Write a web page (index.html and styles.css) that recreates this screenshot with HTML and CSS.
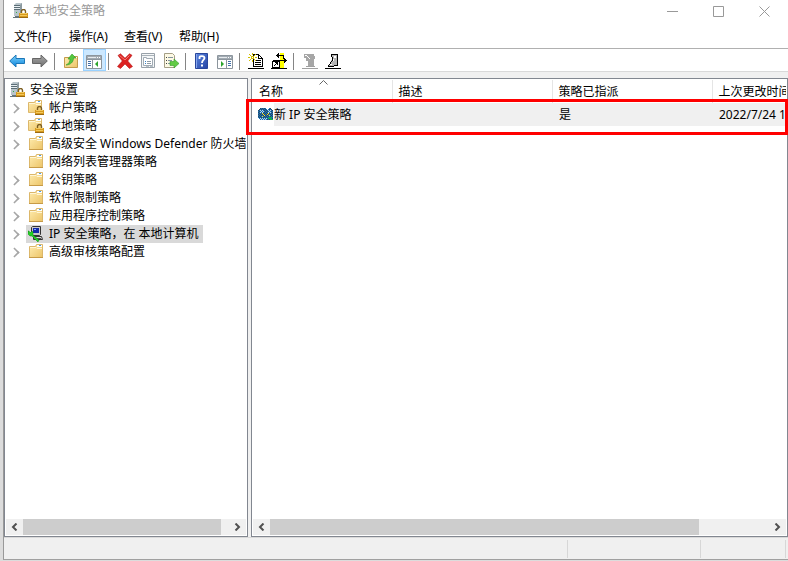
FILE: index.html
```html
<!DOCTYPE html>
<html lang="zh-CN">
<head>
<meta charset="utf-8">
<meta name="viewport" content="width=device-width,initial-scale=1">
<title>本地安全策略</title>
<link rel="stylesheet" href="styles.css">
</head>
<body>
<svg class="defs" aria-hidden="true">
	<defs>
		<linearGradient id="gFolder" x1="0" y1="0" x2="1" y2="1"><stop offset="0" stop-color="#ffedb0"/><stop offset="1" stop-color="#ecc468"/></linearGradient>
		<linearGradient id="gBlue" x1="0" y1="0" x2="0" y2="1"><stop offset="0" stop-color="#7fd3fb"/><stop offset="1" stop-color="#0a83dc"/></linearGradient>
		<linearGradient id="gGray" x1="0" y1="0" x2="0" y2="1"><stop offset="0" stop-color="#a8a8a8"/><stop offset="1" stop-color="#6f6f6f"/></linearGradient>
		<linearGradient id="gHelp" x1="0" y1="0" x2="1" y2="1"><stop offset="0" stop-color="#5b86e0"/><stop offset="1" stop-color="#2443a4"/></linearGradient>
		<symbol id="folder" viewBox="0 0 16 16">
			<path d="M1.500 2.500h6l1-2h6v13h-13z" fill="url(#gFolder)" stroke="#dcb76a"/>
			<path d="M9 1h5v2H9z" fill="#fff"/><path d="M11 1h2v1h-2z" fill="#4a9be0"/>
			<path d="M2 3.500h6l1 1h5" fill="none" stroke="#fff6d6"/>
			<path d="M1 13.500h14" stroke="#c79b47"/>
		</symbol>
		<symbol id="lock" viewBox="0 0 9 9">
			<path d="M2.500 4V2.500a2 2 0 0 1 4 0V4" fill="none" stroke="#7d5f22" stroke-width="1.400"/>
			<path d="M0 4h9v5H0z" fill="#d79a1e"/><path d="M1 4.500h7M1 6.500h7" stroke="#f2c95c"/><path d="M0 8.500h9" stroke="#9a6a12"/>
		</symbol>
		<symbol id="folderlock" viewBox="0 0 16 16">
			<path d="M.5 2.500h6l1-2h6v12H.5z" fill="url(#gFolder)" stroke="#dcb76a"/>
			<path d="M8 1h5v2H8z" fill="#fff"/><path d="M10 1h2v1h-2z" fill="#4a9be0"/>
			<path d="M1 3.500h6l1 1h5" fill="none" stroke="#fff6d6"/>
			<use href="#lock" x="7" y="6" width="9" height="9"/>
		</symbol>
		<symbol id="server" viewBox="0 0 16 16">
			<path d="M1 2l2-2h6v13H1z" fill="#b9c5cb"/><path d="M7 2l2-2v13H7z" fill="#8b999f"/>
			<path d="M1 2.500h6M1 4.500h6M1 6.500h6" stroke="#5b6d76"/><path d="M1 3.500h6M1 5.500h6" stroke="#e6edf0"/>
			<path d="M3 9h1v1H3z" fill="#37ad4a"/><path d="M2 13.500h5M0 14.500h8" stroke="#66747b"/>
			<use href="#lock" x="6" y="6" width="9" height="9"/>
		</symbol>
		<symbol id="panel" viewBox="0 0 16 14">
			<path d="M.5.5h15v13H.5z" fill="#fff" stroke="#8c959d"/><path d="M1 1h14v3H1z" fill="#a2abb3"/>
			<path d="M2 2.500h8" stroke="#e6eaed"/><path d="M11 2h1v1h-1zM13 2h1v1h-1z" fill="#fff"/>
			<path d="M1 4.500h14" stroke="#8c959d"/>
		</symbol>
	</defs>
</svg>

<div class="window">
	<header class="title">
		<svg class="ico" viewBox="0 0 16 16"><use href="#server"/></svg>
		<h1>本地安全策略</h1>
		<div class="winbtns">
			<button type="button" aria-label="最小化"><svg viewBox="0 0 11 11"><path d="M0 5.500h11"/></svg></button>
			<button type="button" aria-label="最大化"><svg viewBox="0 0 11 11"><path d="M.5.5h10v10H.5z"/></svg></button>
			<button type="button" aria-label="关闭"><svg viewBox="0 0 11 11"><path d="M.5.5l10 10M10.500.5l-10 10"/></svg></button>
		</div>
	</header>

	<nav class="menu">
		<button type="button">文件(F)</button>
		<button type="button">操作(A)</button>
		<button type="button">查看(V)</button>
		<button type="button">帮助(H)</button>
	</nav>

	<div class="toolbar">
		<button type="button" aria-label="后退"><svg viewBox="0 0 16 16"><path d="M.7 8L7 2v3.500h8.500v5H7V14z" fill="url(#gBlue)" stroke="#1c77b8"/></svg></button>
		<button type="button" aria-label="前进"><svg viewBox="0 0 16 16"><path d="M15.300 8L9 2v3.500H.5v5H9V14z" fill="url(#gGray)" stroke="#666"/></svg></button>
		<i class="sep"></i>
		<button type="button" aria-label="上一级"><svg viewBox="0 0 16 16"><path d="M1.500 4.500h6l1-1h6v11h-13z" fill="url(#gFolder)" stroke="#c39b4c"/><path d="M10 4h4v1h-4z" fill="#fff"/><path d="M3 12c3-1 4-4 4-6H5l4-5 4 4h-2.500c0 4-3 7-7.500 7z" fill="#55c73f" stroke="#2e9a25" stroke-width=".6"/></svg></button>
		<button type="button" class="on" aria-label="显示/隐藏控制台树"><svg viewBox="0 0 16 16"><use href="#panel" y="2" width="16" height="14"/><path d="M6.500 7v8" stroke="#8c959d"/><path d="M2 8.500h3M2 10.500h3M2 12.500h3" stroke="#3f6fa8"/><path d="M12 8v6l-3-3z" fill="#2ca52c"/></svg></button>
		<i class="sep"></i>
		<button type="button" aria-label="删除"><svg viewBox="0 0 16 16"><path d="M1 2.500L3.500.8 8 5.200 12.500.8 15 2.300 10.700 8l4.800 5.500-3 2L8 10.900l-4.500 4.600-3-2L5.300 8z" fill="#dd2222" stroke="#b51717" stroke-width=".6"/><path d="M2.500 2.500L8 7l4.500-4.500" fill="none" stroke="#f27b72"/></svg></button>
		<button type="button" aria-label="属性"><svg viewBox="0 0 16 16"><path d="M1.500.5h13v14h-13z" fill="#f5f7f8" stroke="#98a1a9"/><path d="M2 2.500h12" stroke="#a8b1b8"/><path d="M3.500 4.500h3v1h6v7h-9z" fill="#fff" stroke="#a1abb4"/><path d="M5 8.500h1M5 10.500h1" stroke="#3683c6"/><path d="M7 8.500h4M7 10.500h4" stroke="#8f9ba5"/><path d="M6 13.500h3M10 13.500h3" stroke="#b7c0c7"/></svg></button>
		<button type="button" aria-label="导出列表"><svg viewBox="0 0 16 16"><path d="M1.500.5h8l2 2v12h-10z" fill="#fdf9e4" stroke="#a59f86"/><path d="M3 4.500h1M3 7.500h1M3 10.500h1" stroke="#444"/><path d="M5 4.500h5M5 7.500h4M5 10.500h3" stroke="#83949f"/><path d="M7 8.500h4V6l5 4.500-5 4.500v-2.500H7z" fill="#62cb45" stroke="#349b2b" stroke-width=".6"/></svg></button>
		<i class="sep"></i>
		<button type="button" aria-label="帮助"><svg viewBox="0 0 16 16"><path d="M1.500.5h12v15h-12z" fill="url(#gHelp)" stroke="#29469c"/><path d="M2.500 1v14" stroke="#88a6ec"/><path d="M5.500 6V4.500c0-2 5-2 5 .5 0 2-2.500 2-2.500 5" fill="none" stroke="#fff" stroke-width="1.800"/><path d="M7 11.500h2v2H7z" fill="#fff"/></svg></button>
		<button type="button" aria-label="显示/隐藏操作窗格"><svg viewBox="0 0 16 16"><use href="#panel" y="2" width="16" height="14"/><path d="M9.500 7v8" stroke="#8c959d"/><path d="M11 8.500h3M11 10.500h3M11 12.500h3" stroke="#3f6fa8"/><path d="M4 8v6l3-3z" fill="#2ca52c"/></svg></button>
		<i class="sep"></i>
		<button type="button" aria-label="创建 IP 安全策略"><svg viewBox="0 0 16 16" shape-rendering="crispEdges"><path d="M5.500 1.500h5l4 4v8h-9z" fill="#fff" stroke="#000"/><path d="M10.500 1.500v4h4M7 7.500h6M7 9.500h6M7 11.500h6" fill="none" stroke="#000"/><path d="M0 15.500h16" stroke="#000"/><path d="M4 0h1v2H4zM0 4h2v1H0zM1 1h1v1H1zM2 2h1v1H2zM7 1h1v1H7zM6 2h1v1H6zM1 7h1v1H1zM2 6h1v1H2zM6 6h1v1H6zM7 7h1v1H7zM4 7h1v2H4zM7 4h2v1H7zM3 3h3v3H3z" fill="#d2bf00"/><path d="M4 4h1v1H4z" fill="#fff"/></svg></button>
		<button type="button" aria-label="管理筛选器"><svg viewBox="0 0 16 16" shape-rendering="crispEdges"><path d="M9 0h4v15H9z" fill="#ff0"/><path d="M2 7.500h13M5 2.500h7v3" fill="none" stroke="#000"/><path d="M13 5h1v5h-1zM14 6h1v3h-1zM15 7h1v1h-1zM6 1h1v3H6zM7 0h1v5H7z" fill="#000"/><path d="M1.500 8.500h7v6h-7z" fill="#fff" stroke="#000"/><path d="M3 12h1v1H3zM4 11h1v1H4zM5 10h1v1H5zM4 9h3v1H4zM6 9h1v3H6z" fill="#000"/><path d="M0 15.500h16" stroke="#000"/></svg></button>
		<i class="sep"></i>
		<button type="button" disabled aria-label="分配"><svg viewBox="0 0 16 16" shape-rendering="crispEdges"><path d="M2 1h10v2h1v3h-1v7H6V8H4V5H2z" fill="#a6a6a6"/><path d="M3 2h2v1H3zM5 3h1v1H5zM6 4h1v1H6zM7 5h1v1H7z" fill="#fff"/><path d="M0 15.500h16M4 13.500h9" stroke="#a0a0a0"/></svg></button>
		<button type="button" aria-label="取消分配"><svg viewBox="0 0 16 16" shape-rendering="crispEdges"><path d="M6 1h7v5h-1v6H9v2H4v-3h2V7h1V4H6z" fill="#b5b5b5"/><path d="M6 1.500h7M6.500 1v3M7.500 4v4M12.500 1v12M6 8.500h1M5.500 9v2M4 11.500h1M3.500 12v2M4 13.500h5M9.500 12v1M10 12.500h3" fill="none" stroke="#000"/><path d="M9 3h2v2H9zM8 6h1v2H8zM5 11h2v1H5z" fill="#fff"/><path d="M0 15.500h16" stroke="#000"/></svg></button>
	</div>

	<main class="panes">
		<section class="pane tree">
			<div class="view">
				<div class="root"><svg class="ico" viewBox="0 0 16 16"><use href="#server"/></svg><span>安全设置</span></div>
				<ul>
					<li><button class="exp" type="button" aria-label="展开"></button><svg class="ico" viewBox="0 0 16 16"><use href="#folderlock"/></svg><span>帐户策略</span></li>
					<li><button class="exp" type="button" aria-label="展开"></button><svg class="ico" viewBox="0 0 16 16"><use href="#folderlock"/></svg><span>本地策略</span></li>
					<li><button class="exp" type="button" aria-label="展开"></button><svg class="ico" viewBox="0 0 16 16"><use href="#folder"/></svg><span>高级安全 Windows Defender 防火墙</span></li>
					<li class="leaf"><svg class="ico" viewBox="0 0 16 16"><use href="#folder"/></svg><span>网络列表管理器策略</span></li>
					<li><button class="exp" type="button" aria-label="展开"></button><svg class="ico" viewBox="0 0 16 16"><use href="#folder"/></svg><span>公钥策略</span></li>
					<li><button class="exp" type="button" aria-label="展开"></button><svg class="ico" viewBox="0 0 16 16"><use href="#folder"/></svg><span>软件限制策略</span></li>
					<li><button class="exp" type="button" aria-label="展开"></button><svg class="ico" viewBox="0 0 16 16"><use href="#folder"/></svg><span>应用程序控制策略</span></li>
					<li class="sel"><button class="exp" type="button" aria-label="展开"></button><div class="hl"><svg class="ico" viewBox="0 0 16 16"><path d="M3.500 1.500l1-1h8v8l-1 1h-8z" fill="#c8c8c8" stroke="#333"/><path d="M5 2h6v5H5z" fill="#102aa8"/><path d="M6 3h2v1H6z" fill="#7fa0ff"/><path d="M5.500 10.500h8l1 3h-9z" fill="#d9d9d9" stroke="#333"/><path d="M8 12.500h5" stroke="#555"/><path d="M0 5h1l1 2 2-2 1 1v3l6 5-1 2-6-6H2L0 8z" fill="#22d522" stroke="#087a12" stroke-width=".5"/></svg><span>IP 安全策略，在 本地计算机</span></div></li>
					<li><button class="exp" type="button" aria-label="展开"></button><svg class="ico" viewBox="0 0 16 16"><use href="#folder"/></svg><span>高级审核策略配置</span></li>
				</ul>
			</div>
			<div class="scroll">
				<button type="button" class="arr" aria-label="向左滚动"><svg viewBox="0 0 7 8"><path d="M5.500.5L2 4l3.500 3.500"/></svg></button>
				<div class="track"><div class="thumb"></div></div>
				<button type="button" class="arr" aria-label="向右滚动"><svg viewBox="0 0 7 8"><path d="M1.500.5L5 4 1.500 7.500"/></svg></button>
			</div>
		</section>

		<section class="pane list">
			<div class="view">
				<table>
					<thead>
						<tr><th class="sorted">名称<svg viewBox="0 0 9 5"><path d="M.5 4.500l4-4 4 4"/></svg></th><th>描述</th><th>策略已指派</th><th>上次更改时间</th></tr>
					</thead>
					<tbody>
						<tr>
							<td class="name"><div>
								<svg class="ico" viewBox="0 0 16 16" shape-rendering="crispEdges">
									<defs><pattern id="dots" width="2" height="2" patternUnits="userSpaceOnUse"><path d="M0 0h1v1H0zM1 1h1v1H1z" fill="#0b6fc0"/></pattern></defs>
									<path d="M0 3l3-2h4l2 2 2-2h2l2 3v9H2l-2-2z" fill="#33485a"/>
									<path d="M2 3h4v3H2zM10 3h3v3h-3zM2 11h7v2H2z" fill="#c3d3de"/>
									<path d="M0 3l3-2h4l2 2 2-2h2l2 3v9H2l-2-2z" fill="url(#dots)"/>
									<path d="M4 6h1v1H4zM5 7h1v1H5zM6 8h1v1H6zM4 9h1v1H4zM10 6h1v1h-1zM9 7h1v1H9zM11 8h1v1h-1z" fill="#e8e337"/>
									<path d="M11 10h3v1h-3zM10 11h3v1h-3zM12 12h3v1h-3z" fill="#12b447"/>
								</svg><span>新 IP 安全策略</span></div></td>
							<td></td><td>是</td><td>2022/7/24 10:12:36</td>
						</tr>
					</tbody>
				</table>
			</div>
			<div class="scroll">
				<button type="button" class="arr" aria-label="向左滚动"><svg viewBox="0 0 7 8"><path d="M5.500.5L2 4l3.500 3.500"/></svg></button>
				<div class="track"><div class="thumb"></div></div>
				<button type="button" class="arr" aria-label="向右滚动"><svg viewBox="0 0 7 8"><path d="M1.500.5L5 4 1.500 7.500"/></svg></button>
			</div>
			<div class="mark"></div>
		</section>
	</main>

	<footer class="status"><span></span><span></span><span></span></footer>
</div>
</body>
</html>
```
FILE: styles.css
```css
html,body{height:100%;margin:0}
*{box-sizing:border-box}
body {
	display:flex;
	padding:0 0 1px 3px;
	background:#dcdcdc;
	color:#000;
	font:12px/18px "Noto Sans","Noto Sans CJK SC",sans-serif;
	overflow:hidden;
}
button {
	margin:0;padding:0;border:0;
	background:none;color:inherit;font:inherit;
}
svg {display:block;flex:none}
.defs {position:absolute;width:0;height:0}
.ico {width:16px;height:16px}

.window {
	flex:1;min-width:0;
	display:flex;flex-direction:column;
	background:#fff;
	border-left:1px solid #999;
	border-bottom:1px solid #a0a0a0;
}
.title {
	display:flex;align-items:center;
	height:24px;
	padding:0 1px 2px 9px;
	color:#999;
}
.title h1 {
	margin:0 0 0 4px;
	font-size:12px;font-weight:normal;
}
.winbtns {display:flex;margin-left:auto}
.winbtns button {
	display:flex;justify-content:center;align-items:center;
	width:46px;height:20px;
}
.winbtns svg {width:11px;height:11px;fill:none;stroke:#999}

.menu {
	display:flex;
	height:25px;
	padding:3px 10px 0;
	border-bottom:1px solid #b0b0b0;
}
.menu button {
	width:55px;height:20px;
	text-align:left;
}

.toolbar {
	display:flex;
	height:23px;
	padding-left:2px;
	border-bottom:1px solid #d9d9d9;
}
.toolbar button {
	width:23px;height:22px;
	padding:4px 4px 2px 3px;
}
.toolbar button svg {width:16px;height:16px}
.toolbar .on {
	padding:3px 3px 1px 2px;
	background:#cce8ff;
	border:1px solid #99d1ff;
}
.sep {
	width:8px;
	padding:4px 0 1px 2px;
}
.sep:before {
	content:"";display:block;
	width:1px;height:100%;
	background:#858585;
}

.panes {
	flex:1;min-height:0;
	display:flex;gap:3px;
	padding-top:6px;
	background:#f0f0f0;
}
.pane {
	display:flex;flex-direction:column;
	min-width:0;
	padding:1px;
	background:#fff;
	border:1px solid #828790;
}
.tree {width:244px}
.list {flex:1;position:relative}
.view {flex:1;overflow:hidden;white-space:nowrap}
.tree .view {padding-top:1px}

.root {
	display:flex;align-items:center;gap:4px;
	padding-left:4px;
}
.tree ul {margin:0;padding:0;list-style:none}
.tree li {
	display:flex;align-items:center;
	height:18px;
	padding-left:4px;
}
.tree li span {margin-left:5px}
.tree .leaf {padding-left:22px}
.exp {
	display:flex;align-items:center;flex:none;
	width:14px;height:18px;
	margin-right:4px;
}
.exp:before {
	content:"";
	width:7px;height:7px;
	border:solid #a6a6a6;
	border-width:2px 2px 0 0;
	transform:rotate(45deg) scale(.8);
}
.hl {
	display:flex;align-items:center;
	height:18px;
	margin-left:-2px;padding:0 4px 0 2px;
	background:#d9d9d9;
}

.list table {
	width:720px;
	table-layout:fixed;
	border-collapse:collapse;
}
.list th {
	position:relative;
	width:160px;height:23px;
	padding:0 0 0 6px;
	font-weight:normal;text-align:left;
	border-left:1px solid #e5e5e5;
}
.list th:first-child {width:139px;border-left:0}
.list th:last-child {width:auto}
.sorted svg {
	position:absolute;top:0;left:66px;
	width:9px;height:5px;
	fill:none;stroke:#666;
}
.list td {
	height:23px;
	padding:0 0 0 7px;
	background:#f0f0f0;
}
.list .name {padding:0;background:none}
.name div {display:flex;align-items:center;padding-left:5px}
.name span {flex:1;line-height:23px;background:#f0f0f0}

.scroll {
	display:flex;
	height:16px;
	background:#f0f0f0;
}
.arr {
	display:flex;justify-content:center;align-items:center;
	width:17px;height:16px;
}
.arr svg {width:7px;height:8px;fill:none;stroke:#505050;stroke-width:2}
.track {flex:1;height:16px}
.thumb {height:16px;background:#cdcdcd}
.tree .thumb {width:96%}
.list .thumb {width:86%}

.mark {
	position:absolute;top:20px;left:-6px;right:-1px;
	height:36px;
	border:3px solid #f00;
}

.status {
	display:flex;justify-content:flex-end;
	height:22px;
	padding:2px 2px 1px 0;
	background:#f0f0f0;
	border-top:1px solid #d9d9d9;
}
.status span {border-right:1px solid #d7d7d7}
.status span:nth-child(1) {flex:1}
.status span:nth-child(2) {width:17%}
.status span:nth-child(3) {width:85px}
```
